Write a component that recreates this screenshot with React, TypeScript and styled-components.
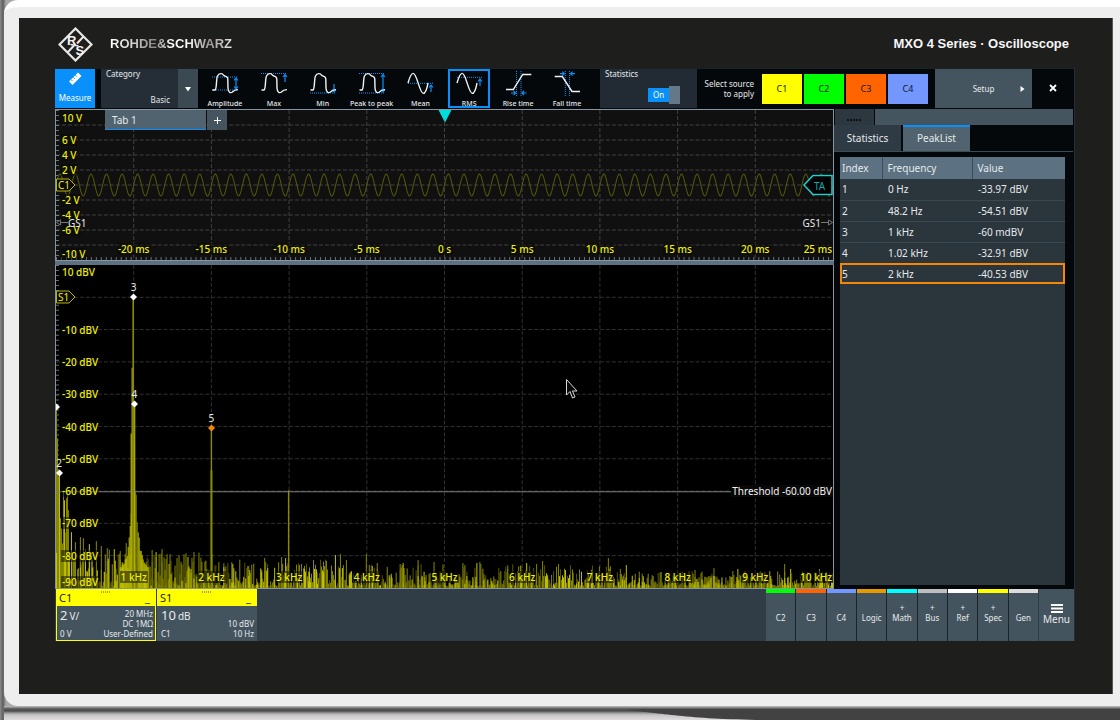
import React, { useState } from "react";
import styled, { createGlobalStyle, css } from "styled-components";

const blue = "#0a90fb";
const yellow = "#ffff00";
const trace = "#8a8a00";

const GlobalStyle = createGlobalStyle`
  *, *::before, *::after { box-sizing: border-box; }
  body {
    margin: 0;
    background: #eeeeee;
    font-family: "Noto Sans", "Open Sans", sans-serif;
    font-size: 10px;
    line-height: 12px;
    color: #e6eaec;
  }
  button, select, input { font: inherit; color: inherit; margin: 0; padding: 0; border: 0; border-radius: 0; }
  button { cursor: pointer; }
`;

/* ---------- instrument case ---------- */

const Case = styled.div`
  display: flex;
  flex-direction: column;
  min-height: 100vh;
  padding-left: 4px;
  background: linear-gradient(90deg, #8b8b8b 0, #5e5e5e 3px, #a8a8a8 6px, #a8a8a8 100%);
`;

const Shell = styled.div`
  flex: 1;
  display: flex;
  flex-direction: column;
  padding: 11px 7px 12px 15px;
  border-top: 7px solid #ffffff;
  border-radius: 14px 0 0 14px;
  background: #eeeeee;
`;

const Bezel = styled.main`
  flex: 1;
  display: flex;
  flex-direction: column;
  padding: 0 37px 53px 36px;
  border-right: 1px solid #55565a;
  background: #1e1e1c;
`;

const Foot = styled.svg`
  display: block;
  width: 100%;
  height: 14px;
`;

const Brand = styled.header`
  display: flex;
  align-items: center;
  height: 50px;
  padding: 2px 6px 0 3px;
  font-family: "Liberation Sans", Arial, sans-serif;
  font-weight: 700;
`;

const BrandName = styled.span`
  margin-left: 17px;
  font-size: 13px;
  line-height: 16px;
  color: transparent;
  background: linear-gradient(90deg, #ffffff 0, #cfcccd 20%, #8d8587 36%, #ffffff 50%, #ffffff 62%, #9f9a9b 82%, #e8e6e6 100%);
  background-clip: text;
`;

const ModelName = styled.h1`
  margin: 0 0 0 auto;
  font-size: 13px;
  font-weight: 700;
  line-height: 16px;
  color: #f6f6f6;
`;

const Screen = styled.section`
  flex: 1;
  display: flex;
  flex-direction: column;
  background: #04080b;
  border-right: 1px solid #252e38;
`;

/* ---------- toolbar ---------- */

const Toolbar = styled.div`
  display: flex;
  height: 41px;
  padding-bottom: 1px;
  border-top: 1px solid #1a2229;
  font-size: 8px;
  line-height: 10px;
`;

const MeasureButton = styled.button`
  display: flex;
  flex-direction: column;
  align-items: center;
  justify-content: space-between;
  width: 40px;
  margin-right: 6px;
  padding: 2px 0 5px;
  background: ${blue};
  color: #ffffff;
`;

const CategoryField = styled.label`
  position: relative;
  width: 97px;
  background: linear-gradient(90deg, #252e36 77px, #3b4953 77px);
`;

const FieldTitle = styled.span`
  position: absolute;
  top: 0;
  left: 5px;
  pointer-events: none;
`;

const CategorySelect = styled.select`
  appearance: none;
  display: block;
  width: 100%;
  height: 100%;
  padding: 22px 28px 0 0;
  background: none;
  text-align: right;
  text-align-last: right;
  option { background: #252e36; }
`;

const DropMark = styled.svg`
  position: absolute;
  top: 17px;
  right: 7px;
  width: 6px;
  height: 6px;
  pointer-events: none;
`;

const Functions = styled.div`
  flex: 1;
  display: flex;
  justify-content: space-between;
  padding: 0 12px 0 6px;
`;

const FunctionButton = styled.button<{ $on?: boolean }>`
  display: flex;
  flex-direction: column;
  align-items: center;
  justify-content: space-between;
  width: 42px;
  padding: 0;
  background: none;
  box-shadow: ${(p) => (p.$on ? `inset 0 0 0 2px ${blue}` : "none")};
  font-size: 7px;
  font-weight: 500;
  line-height: 8px;
  white-space: nowrap;
`;

const StatisticsField = styled.label`
  position: relative;
  width: 97px;
  background: #222b33;
`;

const Switch = styled.span`
  position: absolute;
  right: 17px;
  bottom: 4px;
  display: flex;
  align-items: center;
  width: 32px;
  height: 18px;
  color: #ffffff;
  font-size: 8px;
`;

const SwitchInput = styled.input`
  appearance: none;
  position: absolute;
  inset: 0;
  cursor: pointer;
`;

const SwitchText = styled.span`
  flex: 1;
  height: 14px;
  line-height: 14px;
  text-align: center;
  background: ${blue};
`;

const SwitchKnob = styled.span`
  width: 11px;
  height: 18px;
  background: #647887;
`;

const SourceHint = styled.p`
  width: 65px;
  margin: 0;
  padding-right: 8px;
  align-self: center;
  text-align: right;
`;

const Sources = styled.div`
  display: flex;
  align-items: center;
  gap: 2px;
  margin-right: 7px;
`;

const SourceButton = styled.button<{ $color: string }>`
  width: 40px;
  height: 30px;
  background: ${(p) => p.$color};
  color: #10181c;
  font-size: 9px;
`;

const SetupButton = styled.button`
  position: relative;
  width: 97px;
  background: #445560;
`;

const SetupMark = styled.svg`
  position: absolute;
  top: 17px;
  right: 7px;
  width: 5px;
  height: 6px;
`;

const CloseButton = styled.button`
  width: 42px;
  background: none;
`;

/* ---------- plots ---------- */

const Workspace = styled.div`
  flex: 1;
  display: flex;
`;

const Plots = styled.div`
  flex: 1;
  display: flex;
  flex-direction: column;
  gap: 4px;
  background: #5c7282;
`;

const Plot = styled.section<{ $share: number; $bg: string }>`
  position: relative;
  flex: ${(p) => p.$share} 1 0;
  min-height: ${(p) => p.$share / 2}px;
  border: 1px solid #8795a2;
  background: ${(p) => p.$bg};
  overflow: hidden;
  & + & { border-top: 0; }
`;

const Drawing = styled.svg`
  position: absolute;
  inset: 0;
  width: 100%;
  height: 100%;
`;

const tagBase = css`
  position: absolute;
  padding: 0 1px;
  white-space: nowrap;
  background: rgba(8, 8, 8, 0.5);
`;

const ScaleY = styled.span<{ $at: number }>`
  ${tagBase}
  top: ${(p) => p.$at}%;
  left: 5px;
  transform: translateY(-50%);
  color: #f0f000;
  font-weight: 500;
`;

const ScaleX = styled.span<{ $at: number; $end?: boolean }>`
  ${tagBase}
  bottom: 5px;
  ${(p) => (p.$end ? "right: 0;" : `left: ${p.$at}%; transform: translateX(-50%);`)}
  color: #f0f000;
  font-weight: 500;
`;

const Flag = styled.svg<{ $at: number }>`
  position: absolute;
  left: 0;
  top: ${(p) => p.$at}%;
  width: 20px;
  height: 13px;
  transform: translateY(-50%);
  overflow: visible;
  font-size: 10px;
`;

const TriggerFlag = styled.svg`
  position: absolute;
  right: 0;
  top: 50%;
  width: 30px;
  height: 21px;
  transform: translateY(-50%);
  font-size: 10px;
`;

const TriggerMark = styled.svg`
  position: absolute;
  top: 0;
  left: 50%;
  width: 13px;
  height: 13px;
  transform: translateX(-50%);
`;

const Ground = styled.span<{ $right?: boolean }>`
  position: absolute;
  top: 75%;
  display: flex;
  align-items: center;
  flex-direction: ${(p) => (p.$right ? "row-reverse" : "row")};
  ${(p) => (p.$right ? "right: 0;" : "left: 0;")}
  transform: translateY(-50%);
`;

const PlotTabs = styled.nav`
  position: absolute;
  top: 0;
  left: 49px;
  display: flex;
  gap: 1px;
`;

const PlotTab = styled.button<{ $on?: boolean }>`
  width: ${(p) => (p.$on ? 101 : 20)}px;
  height: 20px;
  padding: ${(p) => (p.$on ? "0 0 0 7px" : "0")};
  box-shadow: ${(p) => (p.$on ? `inset 0 -1px 0 ${blue}` : "none")};
  background: ${(p) => (p.$on ? "#50636f" : "#445560")};
  text-align: ${(p) => (p.$on ? "left" : "center")};
`;

const Marker = styled.span<{ $x: number; $y: number }>`
  position: absolute;
  left: ${(p) => p.$x}%;
  top: ${(p) => p.$y}%;
  display: flex;
  flex-direction: column;
  align-items: center;
  width: 8px;
  height: 20px;
  transform: translate(-50%, -16px);
  line-height: 12px;
  svg { width: 7px; height: 8px; flex: none; }
`;

const Threshold = styled.span<{ $at: number }>`
  ${tagBase}
  right: 0;
  top: ${(p) => p.$at}%;
  transform: translateY(-50%);
  color: #f2f2f2;
  background: #080808;
`;

const Pointer = styled.svg`
  position: absolute;
  left: 65.5%;
  top: 35%;
  width: 14px;
  height: 22px;
`;

/* ---------- side panel ---------- */

const Side = styled.aside`
  display: flex;
  flex-direction: column;
  width: 240px;
  padding-right: 1px;
`;

const HandleBar = styled.div`
  display: flex;
  gap: 1px;
  height: 16px;
  padding-left: 1px;
`;

const Handle = styled.button`
  width: 39px;
  background: #2c373f;
`;

const HandleFill = styled.div`
  flex: 1;
  background: #445560;
`;

const SideTabs = styled.div`
  display: flex;
  gap: 2px;
  height: 27px;
  border-bottom: 1px solid #3d4d58;
`;

const SideTab = styled.button<{ $on: boolean }>`
  width: 67px;
  padding-bottom: 2px;
  border-top: 2px solid ${(p) => (p.$on ? blue : "#2f3b44")};
  background: ${(p) => (p.$on ? "#50636f" : "#2f3b44")};
`;

const SideBody = styled.div`
  flex: 1;
  margin: 5px 8px 4px 6px;
  background: #2b353c;
`;

const PeakTable = styled.table`
  width: 100%;
  border-collapse: collapse;
  table-layout: fixed;
  text-align: left;
`;

const HeadCell = styled.th<{ $w?: number }>`
  height: 22px;
  padding: 0 0 0 ${(p) => (p.$w === 42 ? 2 : 5)}px;
  width: ${(p) => (p.$w ? `${p.$w}px` : "auto")};
  background: #5c7282;
  border: 0 solid #3c4b56;
  border-left-width: ${(p) => (p.$w === 42 ? 0 : 1)}px;
  font-weight: 400;
`;

const PeakRow = styled.tr<{ $on: boolean }>`
  ${(p) => p.$on && `outline: 2px solid #f5860a; outline-offset: -2px;`}
`;

const Cell = styled.td`
  height: 21px;
  padding: 0 0 0 6px;
  border-bottom: 1px solid #3a4851;
  &:first-child { padding-left: 2px; }
  ${PeakRow}:last-child & { border-bottom: 0; }
`;

/* ---------- signal bar ---------- */

const SignalBar = styled.footer`
  display: flex;
  gap: 1px;
  height: 52px;
  padding: 0 0 0 1px;
  background: #313d46;
  font-size: 8px;
  line-height: 10px;
`;

const SignalCard = styled.article<{ $on?: boolean }>`
  width: 100px;
  background: #44545f;
  ${(p) => p.$on && `box-shadow: inset 0 0 0 1px ${yellow};`}
`;

const CardHead = styled.div`
  position: relative;
  display: flex;
  justify-content: space-between;
  height: 17px;
  padding: 2px 6px 0 3px;
  background: ${yellow};
  color: #20260c;
  font-size: 11px;
  line-height: 14px;
`;

const Grip = styled.svg`
  position: absolute;
  top: 2px;
  left: 45px;
  width: 10px;
  height: 2px;
`;

const CardBody = styled.div`
  display: flex;
  justify-content: space-between;
  padding: 3px 3px 0 4px;
`;

const CardColumn = styled.div<{ $end?: boolean }>`
  display: flex;
  flex-direction: column;
  justify-content: flex-end;
  height: 30px;
  text-align: ${(p) => (p.$end ? "right" : "left")};
  strong { font-size: 13px; font-weight: 400; }
  big { font-size: 10px; }
`;

const CardScale = styled.span`
  flex: 1;
  line-height: 13px;
`;

const SignalButtons = styled.div`
  display: grid;
  grid-template-columns: repeat(9, 1fr);
  gap: 1px;
  width: 272px;
  margin-left: auto;
  background: #1c252b;
`;

const SignalButton = styled.button<{ $color: string }>`
  display: flex;
  flex-direction: column;
  justify-content: flex-end;
  align-items: center;
  padding-bottom: 18px;
  border-top: 4px solid ${(p) => p.$color};
  background: #44545f;
  line-height: 10px;
`;

const MenuButton = styled.button`
  display: flex;
  flex-direction: column;
  align-items: center;
  width: 35px;
  padding: 15px 0 0;
  background: #44545f;
  font-size: 10px;
  line-height: 12px;
`;

/* ---------- data ---------- */

const pulse =
  "M8.5 20H11C13 19 12 9 13.5 6C15 3 18.5 3 19.5 5.2C20.5 6.6 23.6 5.5 23.8 9L24 18C24.2 22.6 26.5 23.4 28.4 22C30 20 31.5 19.6 34 19.6";
const wave = "M9 13C11 6 12.4 3.4 14.2 3.4C18 3.4 20.5 23.4 24.3 23.4C26.6 23.4 28 18.5 29 13";

const measureFunctions = [
  { name: "Amplitude", line: pulse, dots: "M8 7H34M8 20H34", arrow: "M32 8V19M30 10.5L32 8L34 10.5M30 16.5L32 19L34 16.5" },
  { name: "Max", line: pulse, dots: "M8 3.5H34", arrow: "M32 4.5V12M30 7L32 4.5L34 7" },
  { name: "Min", line: pulse, dots: "M8 23H34", arrow: "M32 14V22M30 19.5L32 22L34 19.5" },
  { name: "Peak to peak", line: pulse, dots: "M8 3.5H34M8 23H34", arrow: "M32 4.5V22M30 7L32 4.5L34 7M30 19.5L32 22L34 19.5" },
  { name: "Mean", line: wave, dots: "M9 13.3H35", arrow: "M32 15V22M30 17.5L32 15L34 17.5" },
  { name: "RMS", line: wave, dots: "M9 7.3H34", arrow: "M32 9V16M30 11.5L32 9L34 11.5" },
  { name: "Rise time", line: "M9 19.5H16.3L25.7 4.5H34.3", dots: "M19.5 1V26M24 1V26", arrow: "M14 23H18.5M16.5 21L18.5 23L16.5 25M29.5 23H25M27 21L25 23L27 25" },
  { name: "Fall time", line: "M8.7 6.5H16.3L26 21.5H34", dots: "M19.3 1V26M23.5 1V26", arrow: "M14 3.7H18.3M16.3 1.7L18.3 3.7L16.3 5.7M29 3.7H24.5M26.5 1.7L24.5 3.7L26.5 5.7" },
];

const sources = [
  { name: "C1", color: "#ffff00" },
  { name: "C2", color: "#00ff00" },
  { name: "C3", color: "#ff6400" },
  { name: "C4", color: "#7396ff" },
];

const peaks = [
  ["1", "0 Hz", "-33.97 dBV"],
  ["2", "48.2 Hz", "-54.51 dBV"],
  ["3", "1 kHz", "-60 mdBV"],
  ["4", "1.02 kHz", "-32.91 dBV"],
  ["5", "2 kHz", "-40.53 dBV"],
];

const signals = [
  { name: "C2", color: "#00ff00" },
  { name: "C3", color: "#ff6400" },
  { name: "C4", color: "#7396ff" },
  { name: "Logic", color: "#e69a00" },
  { name: "Math", color: "#00ffff", add: true },
  { name: "Bus", color: "#bfbfbf", add: true },
  { name: "Ref", color: "#ffffff", add: true },
  { name: "Spec", color: "#ffff00", add: true },
  { name: "Gen", color: "#dcdcdc" },
];

const volts: [string, number][] = [
  ["10 V", 5], ["6 V", 20], ["4 V", 30], ["2 V", 40], ["-2 V", 60], ["-4 V", 70], ["-6 V", 80], ["-10 V", 96],
];
const times = ["-20 ms", "-15 ms", "-10 ms", "-5 ms", "0 s", "5 ms", "10 ms", "15 ms", "20 ms", "25 ms"];
const levels: [string, number][] = [
  ["10 dBV", 2], ["-10 dBV", 20], ["-20 dBV", 30], ["-30 dBV", 40], ["-40 dBV", 50],
  ["-50 dBV", 60], ["-60 dBV", 70], ["-70 dBV", 80], ["-80 dBV", 90], ["-90 dBV", 98],
];
const freqs = [1, 2, 3, 4, 5, 6, 7, 8, 9, 10].map((n) => `${n} kHz`);
const tenths = [1, 2, 3, 4, 5, 6, 7, 8, 9];

/* ---------- traces, on a 780-unit wide grid ---------- */

const sinePath = (() => {
  let d = "";
  for (let x = 0; x <= 780; x += 1) {
    const y = 75 - 11 * Math.sin(((x - 390) / 15.6) * 2 * Math.PI);
    d += `${x ? "L" : "M"}${x} ${y.toFixed(1)}`;
  }
  return d;
})();

/* prominent lines of the noise floor: position and height above -90 dBV */
const tallLines: [number, number][] = [
  [0, 180], [1, 150], [2, 112], [3, 114], [4, 70], [5, 60], [7, 97], [8, 88], [10, 90], [11, 96], [12, 78], [15, 56],
  [19, 46], [24, 51], [27, 50], [33, 44], [40, 47], [45, 42], [51, 40], [58, 39], [64, 37], [70, 45], [96, 38],
  [100, 36], [103, 34], [106, 39], [121, 30], [132, 31], [138, 36], [156, 34], [163, 26], [177, 24], [192, 22], [209, 30],
  [226, 31], [230, 30], [246, 24], [258, 28], [269, 22], [280, 33], [285, 34], [291, 28], [311, 34], [317, 22], [322, 25],
  [332, 21], [345, 24], [348, 25], [363, 28], [379, 26], [408, 25], [422, 25], [425, 26], [453, 19], [466, 22], [472, 25],
  [482, 24], [488, 27], [504, 24], [511, 18], [537, 18], [554, 30], [566, 19], [572, 23], [641, 18], [660, 20],
  [676, 12], [684, 19], [706, 16], [716, 17], [731, 24], [737, 19], [752, 14], [766, 19], [773, 16],
];

const floorPaths = (() => {
  let seed = 77;
  const rand = () => {
    seed = (seed * 1103515245 + 12345) % 2147483648;
    return seed / 2147483648;
  };
  const tones = ["", "", ""];
  const put = (tone: number, x: number, h: number) => {
    tones[tone] += `M${x + 0.5} 324V${(324 - h).toFixed(1)}`;
  };
  for (let x = 0; x < 780; x += 1) {
    const reach = x < 14 ? 70 : x < 150 ? 42 - x * 0.05 : x < 300 ? 27 : x < 560 ? 22 : 15;
    const power = x < 150 ? 1.1 : 1.9;
    put(rand() > 0.4 ? 1 : 0, x, 2 + reach * Math.pow(rand(), power));
    if (rand() > 0.75) put(2, x, 2 + reach * 0.7 * rand());
    const off = Math.abs(x - 78);
    if (off < 15) put(off > 3 ? 2 : 1, x, 18 + 130 * Math.exp(-off / 3.6) * (0.75 + 0.35 * rand()));
  }
  tallLines.forEach(([x, h], i) => put(i % 4 === 3 ? 2 : 1, x, h));
  return tones;
})();

const Diamond = ({ color = "#ffffff" }: { color?: string }) => (
  <svg viewBox="0 0 7 8" aria-hidden="true">
    <path d="M3.5 0.5L7 4L3.5 7.5L0 4Z" fill={color} />
  </svg>
);

const GridLines = ({ height, color }: { height: number; color: string }) => (
  <g stroke={color} strokeDasharray="4 2">
    {tenths.map((n) => (
      <path key={n} d={`M0 ${(height * n) / 10}H780M${78 * n} 0V${height}`} />
    ))}
  </g>
);

const Ticks = ({ height }: { height: number }) => (
  <path
    d={`M0 ${height - 1.5}H780M1.5 0V${height}`}
    stroke="#a9b2ba"
    strokeWidth="3"
    strokeDasharray="1 4"
    opacity="0.6"
  />
);

const Logo = () => (
  <svg width="35" height="35" viewBox="0 0 35 35" aria-label="R&S">
    <g fill="none" stroke="#e9e7e7">
      <path d="M17.5 1.5L33.5 17.5L17.5 33.5L1.5 17.5Z" strokeWidth="2.2" />
      <path d="M25.5 9.5L19 16.5M16 18.5L9.5 25.5" strokeWidth="2" />
      <path d="M12.5 17.5L20.5 19" strokeWidth="1.5" />
    </g>
    <g fill="#f4f2f2" fontFamily="Liberation Sans, Arial, sans-serif" fontWeight="700" fontSize="13">
      <text x="9" y="18">R</text>
      <text x="17.5" y="28">S</text>
    </g>
  </svg>
);

export default function App() {
  const [fn, setFn] = useState("RMS");
  const [sideTab, setSideTab] = useState("PeakList");
  const [stats, setStats] = useState(true);

  return (
    <>
      <GlobalStyle />
      <Case>
        <Shell>
          <Bezel>
            <Brand>
              <Logo />
              <BrandName>ROHDE&amp;SCHWARZ</BrandName>
              <ModelName>MXO 4 Series · Oscilloscope</ModelName>
            </Brand>

            <Screen>
              <Toolbar>
                <MeasureButton>
                  <svg width="16" height="15" viewBox="0 0 16 15" aria-hidden="true">
                    <path d="M2 10.5L11 1.5L14.5 5L5.5 14Z" fill="#ffffff" />
                    <path d="M4 8.5L5.5 10M6.2 6.3L7.7 7.8M8.4 4.1L9.9 5.6" stroke={blue} />
                  </svg>
                  Measure
                </MeasureButton>

                <CategoryField>
                  <FieldTitle>Category</FieldTitle>
                  <CategorySelect defaultValue="Basic">
                    <option>Basic</option>
                  </CategorySelect>
                  <DropMark viewBox="0 0 6 6" aria-hidden="true">
                    <path d="M0 1H6L3 5.5Z" fill="#ffffff" />
                  </DropMark>
                </CategoryField>

                <Functions>
                  {measureFunctions.map((m) => (
                    <FunctionButton key={m.name} $on={fn === m.name} aria-pressed={fn === m.name} onClick={() => setFn(m.name)}>
                      <svg width="42" height="28" viewBox="0 -1 42 28" fill="none" aria-hidden="true">
                        <path d={m.dots} stroke={blue} strokeDasharray="1 1" />
                        <path d={m.arrow} stroke={blue} strokeWidth="1.2" />
                        <path d={m.line} stroke="#f2f2f2" strokeWidth="1.4" />
                      </svg>
                      {m.name}
                    </FunctionButton>
                  ))}
                </Functions>

                <StatisticsField>
                  <FieldTitle>Statistics</FieldTitle>
                  <Switch>
                    <SwitchText>{stats ? "On" : "Off"}</SwitchText>
                    <SwitchKnob />
                    <SwitchInput type="checkbox" role="switch" checked={stats} onChange={() => setStats(!stats)} />
                  </Switch>
                </StatisticsField>

                <SourceHint>Select source to apply</SourceHint>
                <Sources>
                  {sources.map((s) => (
                    <SourceButton key={s.name} $color={s.color}>{s.name}</SourceButton>
                  ))}
                </Sources>

                <SetupButton>
                  Setup
                  <SetupMark viewBox="0 0 5 6" aria-hidden="true">
                    <path d="M0.5 0L4.5 3L0.5 6Z" fill="#ffffff" />
                  </SetupMark>
                </SetupButton>
                <CloseButton aria-label="Close">
                  <svg width="8" height="8" viewBox="0 0 8 8" aria-hidden="true">
                    <path d="M1 1L7 7M7 1L1 7" stroke="#ffffff" strokeWidth="1.8" />
                  </svg>
                </CloseButton>
              </Toolbar>

              <Workspace>
                <Plots>
                  <Plot $share={151} $bg="#101010" aria-label="Waveform">
                    <Drawing viewBox="0 0 780 150" preserveAspectRatio="none" fill="none">
                      <GridLines height={150} color="#414141" />
                      <Ticks height={150} />
                      <path d={sinePath} stroke="#58580a" />
                    </Drawing>
                    {volts.map(([label, at]) => (
                      <ScaleY key={label} $at={at}>{label}</ScaleY>
                    ))}
                    {times.map((label, i) => (
                      <ScaleX key={label} $at={(i + 1) * 10} $end={i === 9}>{label}</ScaleX>
                    ))}
                    <Flag $at={50} viewBox="0 0 20 13">
                      <path d="M0.5 0.5H13L19 6.5L13 12.5H0.5Z" fill="#0a0a00" stroke="#b4b414" />
                      <text x="2" y="10" fill="#f0f000">C1</text>
                    </Flag>
                    <Ground>
                      <svg width="12" height="7" viewBox="0 0 12 7" fill="none" stroke="#777777" aria-hidden="true">
                        <path d="M4.5 1V6L0.5 3.5ZM4.5 3.5H12" />
                      </svg>
                      GS1
                    </Ground>
                    <Ground $right>
                      <svg width="12" height="7" viewBox="0 0 12 7" fill="none" stroke="#777777" aria-hidden="true">
                        <path d="M7.5 1V6L11.5 3.5ZM7.5 3.5H0" />
                      </svg>
                      GS1
                    </Ground>
                    <TriggerMark viewBox="0 0 13 13" aria-hidden="true">
                      <path d="M0 0H13L6.5 12.5Z" fill="#00dcdc" />
                    </TriggerMark>
                    <TriggerFlag viewBox="0 0 30 21">
                      <path d="M1 10.5L10 1H29V20H10Z" fill="#000000" stroke="#16d4d4" strokeWidth="1.5" />
                      <text x="11" y="15" fill="#12a8a8">TA</text>
                    </TriggerFlag>
                    <PlotTabs>
                      <PlotTab $on>Tab 1</PlotTab>
                      <PlotTab aria-label="Add tab">
                        <svg width="7" height="7" viewBox="0 0 7 7" aria-hidden="true">
                          <path d="M3.5 0V7M0 3.5H7" stroke="#ffffff" />
                        </svg>
                      </PlotTab>
                    </PlotTabs>
                  </Plot>

                  <Plot $share={325} $bg="#000000" aria-label="Spectrum">
                    <Drawing viewBox="0 0 780 324" preserveAspectRatio="none" fill="none">
                      <GridLines height={324} color="#303030" />
                      <Ticks height={324} />
                      <path d={floorPaths[0]} stroke="#555500" />
                      <path d={floorPaths[1]} stroke={trace} />
                      <path d={floorPaths[2]} stroke="#c4c400" />
                      <path d="M156 324V163M233.500 324V226" stroke={trace} strokeWidth="1.4" />
                      <path d="M156 324V206" stroke={trace} strokeWidth="3" opacity="0.45" />
                      <path d="M77.500 324V33M76.500 324V103" stroke={trace} strokeWidth="1.6" />
                      <path d="M79 324V140M75.500 324V169" stroke="#b4b400" strokeWidth="1.2" />
                      <path d="M0 227.500H780" stroke="#808080" />
                    </Drawing>
                    {levels.map(([label, at]) => (
                      <ScaleY key={label} $at={at}>{label}</ScaleY>
                    ))}
                    {freqs.map((label, i) => (
                      <ScaleX key={label} $at={(i + 1) * 10} $end={i === 9}>{label}</ScaleX>
                    ))}
                    <Flag $at={10} viewBox="0 0 20 13">
                      <path d="M0.5 0.5H13L19 6.5L13 12.5H0.5Z" fill="#0a0a00" stroke="#b4b414" />
                      <text x="2" y="10" fill="#f0f000">S1</text>
                    </Flag>
                    <Marker $x={0} $y={44}>
                      <span>&nbsp;</span>
                      <Diamond />
                    </Marker>
                    <Marker $x={0.4} $y={64.5}>2<Diamond /></Marker>
                    <Marker $x={10} $y={10}>3<Diamond /></Marker>
                    <Marker $x={10.1} $y={43}>4<Diamond /></Marker>
                    <Marker $x={20} $y={50.5}>5<Diamond color="#f5860a" /></Marker>
                    <Threshold $at={70}>Threshold -60.00 dBV</Threshold>
                    <Pointer viewBox="0 0 14 22" aria-hidden="true">
                      <path d="M1.500 1.500V17L5 13.500L7.500 20L10 19L7.500 13H12Z" fill="#0a0a0a" stroke="#d8d8d8" />
                    </Pointer>
                  </Plot>
                </Plots>

                <Side>
                  <HandleBar>
                    <Handle aria-label="Move panel">
                      <svg width="15" height="2" viewBox="0 0 15 2" aria-hidden="true">
                        <path d="M0 1H15" stroke="#0c1216" strokeWidth="2" strokeDasharray="2 1" />
                      </svg>
                    </Handle>
                    <HandleFill />
                  </HandleBar>
                  <SideTabs role="tablist">
                    {["Statistics", "PeakList"].map((t) => (
                      <SideTab key={t} role="tab" $on={sideTab === t} aria-selected={sideTab === t} onClick={() => setSideTab(t)}>
                        {t}
                      </SideTab>
                    ))}
                  </SideTabs>
                  <SideBody>
                    <PeakTable>
                      <thead>
                        <tr>
                          <HeadCell $w={42}>Index</HeadCell>
                          <HeadCell $w={90}>Frequency</HeadCell>
                          <HeadCell>Value</HeadCell>
                        </tr>
                      </thead>
                      <tbody>
                        {peaks.map((row) => (
                          <PeakRow key={row[0]} $on={row[0] === "5"}>
                            {row.map((c) => (
                              <Cell key={c}>{c}</Cell>
                            ))}
                          </PeakRow>
                        ))}
                      </tbody>
                    </PeakTable>
                  </SideBody>
                </Side>
              </Workspace>

              <SignalBar>
                <SignalCard $on>
                  <CardHead>
                    C1
                    <Grip viewBox="0 0 10 2" aria-hidden="true">
                      <path d="M0 1H10" stroke="#555500" strokeDasharray="1 1" />
                    </Grip>
                    <span>_</span>
                  </CardHead>
                  <CardBody>
                    <CardColumn>
                      <CardScale><strong>2</strong> <big>V/</big></CardScale>
                      <span>0 V</span>
                    </CardColumn>
                    <CardColumn $end>
                      <span>20 MHz</span>
                      <span>DC 1MΩ</span>
                      <span>User-Defined</span>
                    </CardColumn>
                  </CardBody>
                </SignalCard>
                <SignalCard>
                  <CardHead>
                    S1
                    <Grip viewBox="0 0 10 2" aria-hidden="true">
                      <path d="M0 1H10" stroke="#555500" strokeDasharray="1 1" />
                    </Grip>
                    <span>_</span>
                  </CardHead>
                  <CardBody>
                    <CardColumn>
                      <CardScale><strong>10</strong> <big>dB</big></CardScale>
                      <span>C1</span>
                    </CardColumn>
                    <CardColumn $end>
                      <span>10 dBV</span>
                      <span>10 Hz</span>
                    </CardColumn>
                  </CardBody>
                </SignalCard>

                <SignalButtons>
                  {signals.map((s) => (
                    <SignalButton key={s.name} $color={s.color}>
                      {s.add && <span>+</span>}
                      <span>{s.name}</span>
                    </SignalButton>
                  ))}
                </SignalButtons>
                <MenuButton>
                  <svg width="12" height="9" viewBox="0 0 12 9" aria-hidden="true">
                    <path d="M0 1H12M0 4.500H12M0 8H12" stroke="#ffffff" strokeWidth="1.8" />
                  </svg>
                  Menu
                </MenuButton>
              </SignalBar>
            </Screen>
          </Bezel>
        </Shell>
        <Foot viewBox="0 0 1116 14" preserveAspectRatio="none" aria-hidden="true">
          <defs>
            <linearGradient id="rim" x1="0" y1="0" x2="0" y2="1">
              <stop offset="0" stopColor="#c4c4c4" />
              <stop offset="0.2" stopColor="#5a5a5a" />
              <stop offset="0.35" stopColor="#4a4a4a" />
              <stop offset="0.5" stopColor="#9a9a9a" />
              <stop offset="0.65" stopColor="#c8c6c6" />
              <stop offset="1" stopColor="#dedcdc" />
            </linearGradient>
          </defs>
          <path d="M0 0H1116V14H0Z" fill="url(#rim)" />
          <path d="M620 4C660 7 680 13 760 14H1116V3H640Z" fill="#424242" />
        </Foot>
      </Case>
    </>
  );
}
